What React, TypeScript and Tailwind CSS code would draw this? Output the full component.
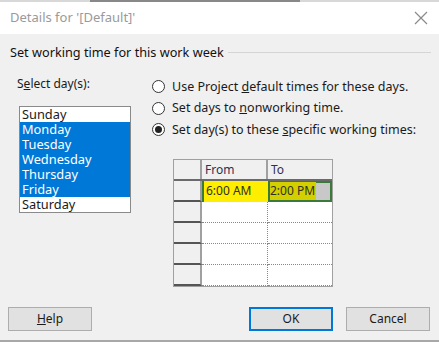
import React from "react";

const font = { fontFamily: '"Noto Sans", "Open Sans", sans-serif' };

function Radio({ checked, children }: { checked?: boolean; children: React.ReactNode }) {
  return (
    <div className="flex h-[21.5px] items-center">
      <div className="flex h-[13px] w-[13px] items-center justify-center rounded-full border border-[#333] bg-white">
        {checked && <div className="h-[7px] w-[7px] rounded-full bg-[#222]" />}
      </div>
      <span className="ml-[7px] text-[12.5px] leading-none text-[#1a1a1a]">{children}</span>
    </div>
  );
}

export default function App() {
  const days = ["Sunday", "Monday", "Tuesday", "Wednesday", "Thursday", "Friday", "Saturday"];
  const selected = [false, true, true, true, true, true, false];
  return (
    <div className="flex h-[342px] w-[439px] flex-col overflow-hidden bg-[#f0f0f0]" style={font}>
      <div className="flex h-[2px]">
        <div className="w-[90px] bg-[#d8d8d8]" />
        <div className="w-[210px] bg-[#888]" />
        <div className="flex-1 bg-[#d8d8d8]" />
      </div>
      <div className="flex h-[32px] items-center justify-between bg-white pl-[10px] pr-[11px]">
        <span className="text-[13px] text-[#9a9a9a]">Details for '[Default]'</span>
        <svg width="14" height="14" viewBox="0 0 14 14">
          <path d="M1 1 L13 13 M13 1 L1 13" stroke="#8a8a8a" strokeWidth="1.2" />
        </svg>
      </div>
      <div className="flex flex-1 flex-col">
        <div className="flex items-center pl-[10px] pr-[8px] pt-[10px]">
          <span className="text-[12.7px] leading-[16px] text-[#111]">Set working time for this work week</span>
          <div className="ml-[4px] h-px flex-1 bg-[#d5d5d5]" />
        </div>
        <div className="mt-[16px] flex">
          <div className="ml-[17px] flex w-[114px] flex-col">
            <div className="h-[16px] text-[12px] leading-[16px] text-[#1a1a1a]">
              S<span className="underline">e</span>lect day(s):
            </div>
            <div className="ml-[2px] mt-[14px] flex w-[112px] flex-col border border-[#8a8a8a] bg-white">
              {days.map((d, i) => (
                <div
                  key={d}
                  className={
                    "h-[15px] pl-[2px] text-[12.8px] leading-[15px] " +
                    (selected[i] ? "bg-[#0078d7] text-white" : "bg-white text-[#1a1a1a]")
                  }
                >
                  {d}
                </div>
              ))}
            </div>
          </div>
          <div className="ml-[21px] flex flex-col">
            <Radio>
              Use Project <span className="underline">d</span>efault times for these days.
            </Radio>
            <Radio>
              Set days to <span className="underline">n</span>onworking time.
            </Radio>
            <Radio checked>
              Set day(s) to these <span className="underline">s</span>pecific working times:
            </Radio>
            <div className="ml-[21px] mt-[18px] flex w-[160px] flex-col border border-[#a0a0a0] bg-white">
              <div className="flex h-[21px] border-b-2 border-[#6a6a6a]">
                <div className="w-[28px] border-r-2 border-[#a0a0a0] bg-[#f0f0f0]" />
                <div className="flex w-[66px] items-end border-r-2 border-[#a0a0a0] bg-[#f0f0f0] pl-[3px] text-[12px] leading-[18px] text-[#303050]">
                  From
                </div>
                <div className="flex flex-1 items-end bg-[#f0f0f0] pl-[3px] text-[12px] leading-[18px] text-[#303050]">
                  To
                </div>
              </div>
              {[0, 1, 2, 3, 4].map((r) => (
                <div key={r} className="flex h-[21px]">
                  <div className="w-[28px] border-b-2 border-r-2 border-b-[#555] border-r-[#a0a0a0] bg-[#f0f0f0]" />
                  {r === 0 ? (
                    <>
                      <div className="flex w-[66px] items-center border-l-2 border-[#3a7a3a] bg-[#ffee00] pl-[2px] text-[12px] text-[#303020]">
                        6:00 AM
                      </div>
                      <div className="flex flex-1 items-center border-2 border-[#3a7a3a] bg-[#c8c8c8] text-[12px] text-[#303020]">
                        <span className="whitespace-nowrap bg-[#d4d000] pr-[1px]">2:00 PM</span>
                      </div>
                    </>
                  ) : (
                    <>
                      <div className="w-[66px] border-b border-r border-dotted border-[#888]" />
                      <div className="flex-1 border-b border-dotted border-[#888]" />
                    </>
                  )}
                </div>
              ))}
            </div>
          </div>
        </div>
        <div className="mt-auto flex justify-between pb-[9px] pl-[8px] pr-[9px]">
          <button className="h-[24px] w-[84px] border border-[#adadad] bg-[#e1e1e1] text-[12px] text-[#1a1a1a]">
            <span className="underline">H</span>elp
          </button>
          <div className="flex gap-[13px]">
            <button className="h-[24px] w-[84px] border-2 border-[#0078d7] bg-[#e1e1e1] text-[12px] text-[#1a1a1a]">
              OK
            </button>
            <button className="h-[24px] w-[84px] border border-[#adadad] bg-[#e1e1e1] text-[12px] text-[#1a1a1a]">
              Cancel
            </button>
          </div>
        </div>
      </div>
      <div className="h-[2px] bg-[#a8a8a8]" />
    </div>
  );
}
